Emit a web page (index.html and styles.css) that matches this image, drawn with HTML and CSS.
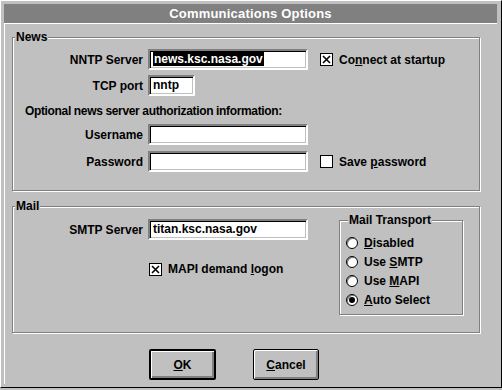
FILE: index.html
```html
<!DOCTYPE html>
<html lang="en">
<head>
    <meta charset="UTF-8">
    <title>Communications Options</title>
    <link rel="stylesheet" href="styles.css">
</head>
<body>
<div class="dialog">
    <div class="titlebar">Communications Options</div>

    <div class="client">
        <!-- News group -->
        <fieldset class="group news">
            <legend>News</legend>
            <div class="form-grid">
                <span class="lbl">NNTP Server</span>
                <div class="field wide"><span class="sel">news.ksc.nasa.gov</span></div>
                <div class="check">
                    <svg class="box" width="13" height="13" viewBox="0 0 13 13"><rect x="0.5" y="0.5" width="12" height="12" fill="#fff" stroke="#000"/><path d="M3 3 L10 10 M10 3 L3 10" stroke="#000" stroke-width="1.6"/></svg>
                    <span>Co<u>n</u>nect at startup</span>
                </div>

                <span class="lbl">TCP port</span>
                <div class="field short">nntp</div>
                <span></span>

                <p class="note">Optional news server authorization information:</p>

                <span class="lbl">Username</span>
                <div class="field wide"></div>
                <span></span>

                <span class="lbl pw">Password</span>
                <div class="field wide pw"></div>
                <div class="check pw">
                    <svg class="box" width="13" height="13" viewBox="0 0 13 13"><rect x="0.5" y="0.5" width="12" height="12" fill="#fff" stroke="#000"/></svg>
                    <span>Save <u>p</u>assword</span>
                </div>
            </div>
        </fieldset>

        <!-- Mail group -->
        <fieldset class="group mail">
            <legend>Mail</legend>
            <div class="mail-row">
                <div class="form-grid mail-grid">
                    <span class="lbl">SMTP Server</span>
                    <div class="field wide">titan.ksc.nasa.gov</div>
                    <div class="check mapi">
                        <svg class="box" width="13" height="13" viewBox="0 0 13 13"><rect x="0.5" y="0.5" width="12" height="12" fill="#fff" stroke="#000"/><path d="M3 3 L10 10 M10 3 L3 10" stroke="#000" stroke-width="1.6"/></svg>
                        <span>MAPI demand <u>l</u>ogon</span>
                    </div>
                </div>

                <fieldset class="group transport">
                    <legend>Mail Transport</legend>
                    <div class="radio"><span class="dot"></span><span><u>D</u>isabled</span></div>
                    <div class="radio"><span class="dot"></span><span>Use <u>S</u>MTP</span></div>
                    <div class="radio"><span class="dot"></span><span>Use <u>M</u>API</span></div>
                    <div class="radio on"><span class="dot"></span><span><u>A</u>uto Select</span></div>
                </fieldset>
            </div>
        </fieldset>

        <div class="buttons">
            <button class="btn default"><u>O</u>K</button>
            <button class="btn"><u>C</u>ancel</button>
        </div>
    </div>
</div>
</body>
</html>
```

FILE: styles.css
```css
* {
    box-sizing: border-box;
}

body {
    margin: 0;
    background-color: #c0c0c0;
    font: bold 12px "Liberation Sans", Arial, sans-serif;
    color: #000;
}

/* Dialog frame */
.dialog {
    width: 502px;
    height: 388px;
    border: 1px solid;
    border-color: #fff #000 #000 #fff;
    padding: 3px;
    display: flex;
    flex-direction: column;
}

.titlebar {
    height: 20px;
    margin-right: 1px;
    background-color: #808080;
    color: #fff;
    font-size: 13px;
    letter-spacing: 0.2px;
    line-height: 19px;
    text-align: center;
    border-bottom: 1px solid #fff;
}

.client {
    flex: 1;
    border-left: 1px solid #fff;
    padding: 6px 0 0 7px;
}

/* Group boxes */
.group {
    margin: 0;
    padding: 0;
    border: 1px solid #808080;
    box-shadow: 1px 1px 0 #fff, inset 1px 1px 0 #fff;
}

.group legend {
    margin-left: 2px;
    padding: 0 1px;
    line-height: 14px;
    background-color: #c0c0c0;
}

.news {
    width: 468px;
    height: 161px;
}

.mail {
    width: 468px;
    height: 134px;
    margin-top: 8px;
}

/* Label / field grid */
.form-grid {
    display: grid;
    grid-template-columns: 130px 160px auto;
    column-gap: 5px;
    row-gap: 5px;
    align-items: center;
    padding-top: 5px;
}

.lbl {
    text-align: right;
}

.pw {
    margin-top: 1px;
}

.note {
    grid-column: 1 / -1;
    margin: 3px 0 1px 12px;
    letter-spacing: -0.35px;
}

.field {
    height: 21px;
    background-color: #fff;
    border: 2px solid;
    border-color: #808080 #fff #fff #808080;
    box-shadow: inset 1px 1px 0 #000, inset -1px -1px 0 #c0c0c0;
    padding: 1px 0 0 3px;
    line-height: 15px;
    white-space: nowrap;
}

.wide {
    width: 160px;
}

.short {
    width: 47px;
}

.sel {
    background-color: #000;
    color: #fff;
    padding: 0 1px;
}

/* Check boxes */
.check {
    display: flex;
    align-items: center;
    gap: 6px;
    margin-left: 7px;
}

.box {
    display: block;
    flex: none;
}

/* Mail section */
.mail-row {
    display: flex;
    align-items: flex-start;
}

.mail-grid {
    grid-template-columns: 130px 160px;
    row-gap: 22px;
    padding-top: 6px;
}

.mapi {
    grid-column: 2;
    margin-left: 1px;
}

.transport {
    width: 124px;
    height: 102px;
    margin-left: 31px;
    padding: 6px 0 0 6px;
}

.radio {
    display: flex;
    align-items: center;
    gap: 6px;
    height: 19px;
}

.dot {
    width: 12px;
    height: 12px;
    border-radius: 50%;
    border: 1px solid #000;
    background-color: #fff;
    box-shadow: inset 1px 1px 0 #808080;
    position: relative;
}

.radio.on .dot::after {
    content: "";
    position: absolute;
    left: 2px;
    top: 2px;
    width: 6px;
    height: 6px;
    border-radius: 50%;
    background-color: #000;
}

/* Buttons */
.buttons {
    display: flex;
    gap: 37px;
    margin: 16px 0 0 137px;
}

.btn {
    width: 66px;
    height: 31px;
    font: inherit;
    color: #000;
    background-color: #c0c0c0;
    border: 1px solid #000;
    border-radius: 2px;
    box-shadow: inset 1px 1px 0 #fff, inset -2px -2px 0 #808080;
    padding: 0;
}

.btn.default {
    width: 67px;
    border-width: 2px;
}
```
